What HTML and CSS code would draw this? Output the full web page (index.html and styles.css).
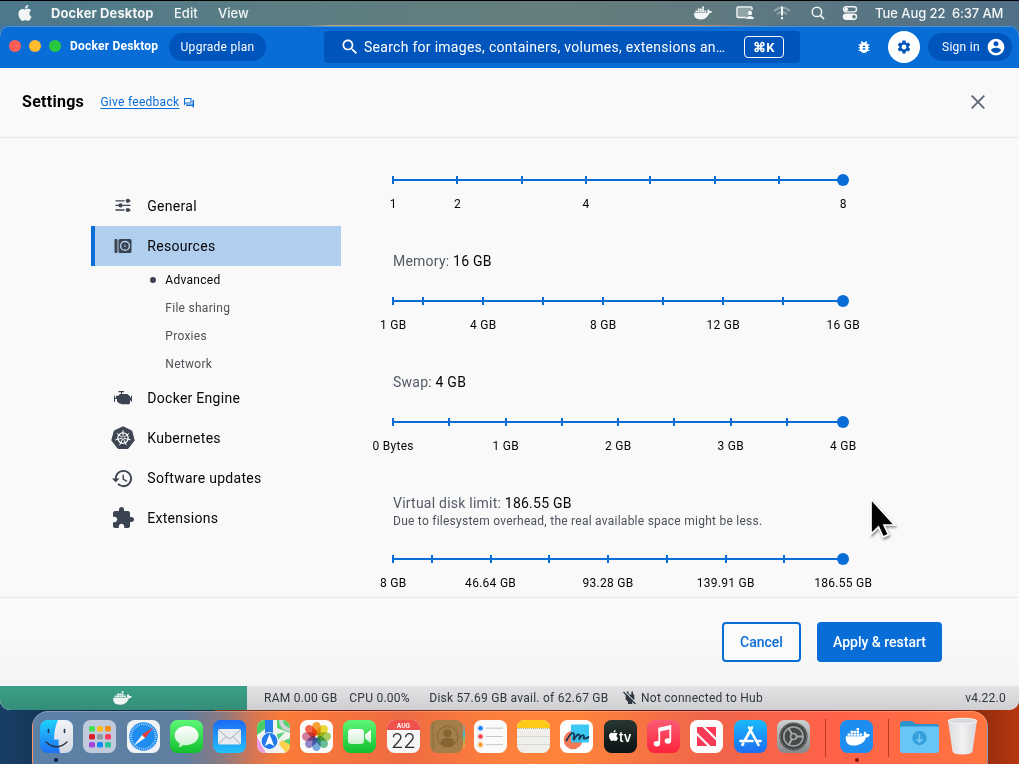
FILE: index.html
```html
<!DOCTYPE html>
<html lang="en">
<head>
<meta charset="utf-8">
<title>Docker Desktop</title>
<link rel="stylesheet" href="styles.css">
</head>
<body>
<svg class="defs" width="0" height="0">
  <symbol id="whale" viewBox="0 3 24 18"><path d="M13.8 8.82h2.5v2.26h-2.5zM10.84 3.39h2.5v2.26h-2.5zM10.84 6.1h2.5v2.26h-2.5zM7.9 6.1h2.5v2.26H7.9zM4.95 6.1h2.5v2.26h-2.5zM10.84 8.82h2.5v2.26h-2.5zM7.9 8.82h2.5v2.26H7.9zM4.95 8.82h2.5v2.26h-2.5zM2.03 8.82h2.5v2.26h-2.5zM23.763 9.89c-.065-.051-.672-.51-1.954-.51-.338.001-.676.03-1.01.087-.248-1.7-1.653-2.53-1.716-2.566l-.344-.199-.226.327c-.284.438-.49.922-.612 1.43-.23.97-.09 1.882.403 2.661-.595.332-1.55.413-1.744.42H.751a.751.751 0 00-.75.748 11.376 11.376 0 00.692 4.062c.545 1.428 1.355 2.48 2.41 3.124 1.18.723 3.1 1.137 5.275 1.137.983.003 1.963-.086 2.93-.266a12.248 12.248 0 003.823-1.389c.98-.567 1.86-1.288 2.61-2.136 1.252-1.418 1.998-2.997 2.553-4.4h.221c1.372 0 2.215-.549 2.68-1.009.309-.293.55-.65.707-1.046z"/></symbol>
  <symbol id="apple" viewBox="0 0 24 24"><path d="M12.152 6.896c-.948 0-2.415-1.078-3.96-1.04-2.04.027-3.91 1.183-4.961 3.014-2.117 3.675-.546 9.103 1.519 12.09 1.013 1.454 2.208 3.09 3.792 3.039 1.52-.065 2.09-.987 3.935-.987 1.831 0 2.35.987 3.96.948 1.637-.026 2.676-1.48 3.676-2.948 1.156-1.688 1.636-3.325 1.662-3.415-.039-.013-3.182-1.221-3.22-4.857-.026-3.04 2.48-4.494 2.597-4.559-1.429-2.09-3.623-2.324-4.39-2.376-2-.156-3.675 1.09-4.61 1.09zM15.53 3.83c.843-1.012 1.4-2.427 1.245-3.83-1.207.052-2.662.805-3.532 1.818-.78.896-1.454 2.338-1.273 3.714 1.338.104 2.715-.688 3.559-1.701"/></symbol>
</svg>
<div class="desktop">
  <div class="menubar">
    <svg class="mb-apple" width="16" height="16"><use href="#apple"/></svg>
    <span class="mb-app">Docker Desktop</span>
    <span class="mb-edit">Edit</span>
    <span class="mb-view">View</span>
    <div class="mb-right">
      <svg width="18" height="14"><use href="#whale"/></svg>
      <svg width="18" height="14" viewBox="0 0 18 14" fill="none"><path d="M10 11.5H2.2A1.2 1.2 0 0 1 1 10.300V2.200A1.200 1.200 0 0 1 2.200 1h12.600A1.200 1.200 0 0 1 16 2.200V4" stroke="currentColor" stroke-width="1.500"/><path d="M2 2h13v4l-4 5H2z" fill="currentColor" opacity=".35"/><circle cx="14" cy="7" r="2.200" fill="currentColor"/><path d="M10 13c0-4 8-4 8 0z" fill="currentColor"/></svg>
      <svg width="18" height="14" viewBox="0 0 18 14" fill="none" stroke="currentColor"><path d="M1 5.200Q9-2.200 17 5.200M4 8.200q5-4.400 10 0" stroke-width="2" opacity=".35"/><path d="M9 .500v9M9 11v2.200" stroke-width="2"/></svg>
      <svg width="14" height="14" viewBox="0 0 14 14" fill="none" stroke="currentColor"><circle cx="5.900" cy="5.900" r="4.700" stroke-width="1.500"/><path d="M9.400 9.400l3.600 3.600" stroke-width="1.700"/></svg>
      <svg width="16" height="14" viewBox="0 0 16 14" fill="none"><rect x="1.500" y=".700" width="13" height="5.200" rx="2.600" stroke="currentColor" stroke-width="1.400"/><circle cx="4.200" cy="3.300" r="1.900" fill="currentColor"/><rect x=".800" y="7.600" width="14.400" height="6.300" rx="3.100" fill="currentColor"/><circle cx="12" cy="10.800" r="1.800" fill="#5b7680"/></svg>
    </div>
    <span class="mb-date">Tue Aug 22</span><span class="mb-time">6:37 AM</span>
  </div>

  <div class="window">
    <header class="titlebar">
      <i class="light red"></i><i class="light amber"></i><i class="light green"></i>
      <b class="title">Docker Desktop</b>
      <button class="pill upgrade">Upgrade plan</button>
      <div class="search">
        <svg width="20" height="20" viewBox="0 0 24 24"><path d="M15.5 14h-.79l-.28-.27C15.410 12.590 16 11.110 16 9.500 16 5.910 13.090 3 9.500 3S3 5.910 3 9.500 5.910 16 9.500 16c1.610 0 3.090-.59 4.230-1.570l.27.28v.79l5 4.990L20.490 19l-4.990-5zm-6 0C7.010 14 5 11.990 5 9.500S7.010 5 9.500 5 14 7.010 14 9.500 11.990 14 9.500 14z"/></svg>
        <span class="search-text">Search for images, containers, volumes, extensions an…</span>
        <kbd>⌘K</kbd>
      </div>
      <svg class="bug" width="16" height="16" viewBox="0 0 24 24"><path d="M20 8h-2.810c-.45-.78-1.070-1.450-1.820-1.960L17 4.410 15.590 3l-2.170 2.170C12.960 5.060 12.490 5 12 5c-.49 0-.96.06-1.410.17L8.410 3 7 4.410l1.620 1.630C7.880 6.550 7.260 7.220 6.810 8H4v2h2.090c-.05.33-.09.66-.09 1v1H4v2h2v1c0 .34.04.67.09 1H4v2h2.810c1.040 1.790 2.970 3 5.190 3s4.150-1.210 5.190-3H20v-2h-2.090c.05-.33.09-.66.09-1v-1h2v-2h-2v-1c0-.34-.04-.67-.09-1H20V8zm-6 8h-4v-2h4v2zm0-4h-4v-2h4v2z"/></svg>
      <div class="gear"><svg width="16" height="16" viewBox="0 0 24 24"><path d="M19.140 12.940c.04-.3.060-.61.060-.94 0-.32-.02-.64-.07-.94l2.030-1.580c.18-.14.23-.41.12-.61l-1.920-3.320c-.12-.22-.37-.29-.59-.22l-2.390.96c-.5-.38-1.030-.7-1.620-.94l-.36-2.540c-.04-.24-.24-.41-.48-.41h-3.840c-.24 0-.43.17-.47.41l-.36 2.540c-.59.24-1.130.57-1.620.94l-2.390-.96c-.22-.08-.47 0-.59.22L2.740 8.870c-.12.21-.08.47.12.61l2.030 1.580c-.05.3-.09.63-.09.94s.02.64.07.94l-2.030 1.580c-.18.14-.23.41-.12.61l1.920 3.320c.12.22.37.29.59.22l2.390-.96c.5.38 1.030.7 1.620.94l.36 2.540c.05.24.24.41.48.41h3.840c.24 0 .44-.17.47-.41l.36-2.540c.59-.24 1.130-.56 1.620-.94l2.390.96c.22.08.47 0 .59-.22l1.920-3.320c.12-.22.07-.47-.12-.61l-2.010-1.580zM12 15.600c-1.980 0-3.600-1.620-3.600-3.600s1.620-3.600 3.600-3.600 3.600 1.620 3.600 3.600-1.620 3.600-3.600 3.600z"/></svg></div>
      <button class="pill signin">Sign in<svg width="20" height="20" viewBox="0 0 24 24"><path d="M12 2C6.480 2 2 6.480 2 12s4.480 10 10 10 10-4.480 10-10S17.520 2 12 2zm0 3c1.660 0 3 1.340 3 3s-1.340 3-3 3-3-1.340-3-3 1.340-3 3-3zm0 14.200c-2.500 0-4.710-1.280-6-3.220.03-1.990 4-3.080 6-3.080 1.990 0 5.970 1.090 6 3.080-1.290 1.940-3.500 3.220-6 3.220z"/></svg></button>
    </header>

    <div class="page-head">
      <h1>Settings</h1>
      <a class="feedback">Give feedback</a>
      <svg class="chat" width="12" height="12" viewBox="0 0 24 24"><path d="M15 4v7H5.170L4 12.170V4h11m1-2H3c-.55 0-1 .45-1 1v14l4-4h10c.55 0 1-.45 1-1V3c0-.55-.45-1-1-1zm5 4h-2v9H6v2c0 .55.45 1 1 1h11l4 4V7c0-.55-.45-1-1-1z"/></svg>
      <svg class="close" width="16" height="16" viewBox="0 0 16 16"><path d="M1.700 1.700l12.600 12.600M14.300 1.700L1.700 14.300" stroke="#5b6573" stroke-width="1.800"/></svg>
    </div>

    <main class="body">
      <nav class="side">
        <a class="item"><span class="ico"><svg width="16" height="16" viewBox="0 0 16 16"><path d="M.500 2.800h9M11 2.800h4.500M.500 7.400h4M8 7.400h7.500M.500 12h9M11 12h4.500" stroke="#3b4450" stroke-width="1.300"/><circle cx="12.800" cy="2.800" r="2.100"/><circle cx="5.600" cy="7.400" r="2.100"/><circle cx="12.800" cy="12" r="2.100"/></svg></span>General</a>
        <a class="item active"><span class="ico"><svg width="18" height="16" viewBox="0 0 18 16"><rect x=".5" y="1" width="3" height="14" rx="1"/><rect x="4.500" y="1" width="13" height="14" rx="1.500"/><circle cx="11" cy="7.900" r="4.400" fill="none" stroke="#b0ceee" stroke-width="1.400"/><circle cx="11" cy="7.900" r="1" fill="#8fa8c4"/></svg></span>Resources</a>
        <a class="sub current">Advanced</a>
        <a class="sub">File sharing</a>
        <a class="sub">Proxies</a>
        <a class="sub">Network</a>
        <a class="item"><span class="ico"><svg width="20" height="16" viewBox="0 0 20 16"><path d="M5.500 1h5.500v1.200H9V4h5.500l1.500 1.500V6h1v1.500h1V5.800h1v6h-1V10.500h-1v3l-1 .800H9l-2.500-.8L4 11.500V9H2v3H1V5.500h1V8h1V5.800h2.500L6.800 4H8V2.200H5.500z"/></svg></span>Docker Engine</a>
        <a class="item"><span class="ico"><svg width="24" height="24" viewBox="0 0 24 24"><path d="M12 .800l8.700 4.100 2.500 9.400-6.200 8.200H7L.800 14.300l2.500-9.400z" stroke="#3b4450" stroke-width="1" stroke-linejoin="round"/><g fill="none" stroke="#fff" stroke-width="1.300"><circle cx="12" cy="12.100" r="5.200"/><path d="M12 12.100V4.200M12 12.100l6.200-4.900M12 12.100l7.700 1.800M12 12.100l3.400 7.100M12 12.100l-3.400 7.100M12 12.100l-7.700 1.800M12 12.100L5.800 7.200" stroke-width="1"/></g><circle cx="12" cy="12.100" r="1"/></svg></span>Kubernetes</a>
        <a class="item history"><span class="ico"><svg width="23" height="23" viewBox="0 0 24 24"><path d="M13 3c-4.970 0-9 4.030-9 9H1l3.890 3.890.07.14L9 12H6c0-3.870 3.130-7 7-7s7 3.130 7 7-3.130 7-7 7c-1.930 0-3.680-.79-4.940-2.060l-1.420 1.420C8.270 19.990 10.510 21 13 21c4.970 0 9-4.030 9-9s-4.030-9-9-9zm-1 5v5l4.280 2.540.72-1.210-3.500-2.080V8H12z"/></svg></span>Software updates</a>
        <a class="item"><span class="ico"><svg width="24" height="24" viewBox="0 0 24 24"><path d="M20.500 11H19V7c0-1.100-.9-2-2-2h-4V3.500C13 2.120 11.880 1 10.500 1S8 2.120 8 3.500V5H4c-1.100 0-1.990.9-1.990 2v3.800H3.500c1.490 0 2.700 1.210 2.700 2.700s-1.210 2.700-2.700 2.700H2V20c0 1.100.9 2 2 2h3.800v-1.500c0-1.490 1.210-2.700 2.700-2.700 1.490 0 2.700 1.210 2.700 2.700V22H17c1.100 0 2-.9 2-2v-4h1.500c1.380 0 2.500-1.120 2.500-2.500S21.880 11 20.500 11z"/></svg></span>Extensions</a>
      </nav>
      <section class="resources">
        <div class="field">
          <div class="slider"><i style="left:0%"></i><i style="left:14.286%"></i><i style="left:28.571%"></i><i style="left:42.857%"></i><i style="left:57.143%"></i><i style="left:71.5%"></i><i style="left:85.714%"></i><b></b><span style="left:0%">1</span><span style="left:14.286%">2</span><span style="left:42.857%">4</span><span style="left:100%">8</span></div>
        </div>
        <div class="field">
          <div class="label">Memory: <em>16 GB</em></div>
          <div class="slider"><i style="left:0%"></i><i style="left:6.667%"></i><i style="left:20%"></i><i style="left:33.333%"></i><i style="left:46.667%"></i><i style="left:60%"></i><i style="left:73.333%"></i><i style="left:86.667%"></i><b></b><span style="left:0%">1 GB</span><span style="left:20%">4 GB</span><span style="left:46.667%">8 GB</span><span style="left:73.333%">12 GB</span><span style="left:100%">16 GB</span></div>
        </div>
        <div class="field">
          <div class="label">Swap: <em>4 GB</em></div>
          <div class="slider"><i style="left:0%"></i><i style="left:12.5%"></i><i style="left:25%"></i><i style="left:37.5%"></i><i style="left:50%"></i><i style="left:62.5%"></i><i style="left:75%"></i><i style="left:87.5%"></i><b></b><span style="left:0%">0 Bytes</span><span style="left:25%">1 GB</span><span style="left:50%">2 GB</span><span style="left:75%">3 GB</span><span style="left:100%">4 GB</span></div>
        </div>
        <div class="field">
          <div class="label">Virtual disk limit: <em>186.55 GB</em></div>
          <div class="hint">Due to filesystem overhead, the real available space might be less.</div>
          <div class="slider"><i style="left:0%"></i><i style="left:8.6%"></i><i style="left:21.8%"></i><i style="left:34.7%"></i><i style="left:47.75%"></i><i style="left:60.9%"></i><i style="left:73.9%"></i><i style="left:86.95%"></i><b></b><span style="left:0%">8 GB</span><span style="left:21.65%">46.64 GB</span><span style="left:47.75%">93.28 GB</span><span style="left:73.9%">139.91 GB</span><span style="left:100%">186.55 GB</span></div>
        </div>
      </section>
    </main>

    <footer class="actions">
      <button class="btn cancel">Cancel</button>
      <button class="btn apply">Apply &amp; restart</button>
    </footer>

    <div class="status">
      <div class="engine"><svg width="19" height="14"><use href="#whale"/></svg></div>
      <span class="ram">RAM 0.00 GB</span>
      <span class="cpu">CPU 0.00%</span>
      <span class="disk">Disk 57.69 GB avail. of 62.67 GB</span>
      <svg width="13" height="14" viewBox="0 0 13 14"><path d="M4 .500h1.600v3h2.800v-3H10v3h1.300v5l-2 2.300V13H5v-2.200L2.700 8.500v-5H4z"/><path d="M1.500 .500l11.500 11.500" stroke="#dcdcde" stroke-width="1.200"/><path d="M.500 1l12 12" stroke="#2e3640" stroke-width="1.300"/></svg>
      <span class="hub">Not connected to Hub</span>
      <span class="ver">v4.22.0</span>
    </div>
  </div>

  <div class="dock">
    <div class="slot run"><svg viewBox="0 0 33 33"><defs><linearGradient id="gf" x2="0" y2="1"><stop stop-color="#1ed0fb"/><stop offset="1" stop-color="#1e70f3"/></linearGradient><linearGradient id="gw" x2="0" y2="1"><stop stop-color="#f3f4f7"/><stop offset="1" stop-color="#d3d8e2"/></linearGradient><clipPath id="r"><rect width="33" height="33" rx="7.500"/></clipPath></defs><g clip-path="url(#r)"><path d="M0 0h33v33H0z" fill="url(#gf)"/><path d="M18 0h15v33H20q-1.800-7-1.500-13.500H14Q14 9 18 0z" fill="url(#gw)"/></g><path d="M8.500 9.500v3M24.500 9.500v3" stroke="#173653" stroke-width="1.600" stroke-linecap="round"/><path d="M6 22q10.500 9.500 21 0" fill="none" stroke="#223143" stroke-width="1.300" stroke-linecap="round"/></svg></div>
    <div class="slot"><svg viewBox="0 0 33 33"><rect width="33" height="33" rx="7.500" fill="#bfcbdc"/><g><rect x="6" y="6" width="6" height="5.500" rx="1.500" fill="#3fe053"/><rect x="14" y="6" width="6" height="5.500" rx="1.500" fill="#ffbd16"/><rect x="22" y="6" width="6" height="5.500" rx="1.500" fill="#ff8d0a"/><rect x="6" y="14" width="6" height="5.500" rx="1.500" fill="#dc1f2d"/><rect x="14" y="14" width="6" height="5.500" rx="1.500" fill="#929ba1"/><rect x="22" y="14" width="6" height="5.500" rx="1.500" fill="#fb3d5e"/><rect x="6" y="22" width="6" height="5.500" rx="1.500" fill="#a345dc"/><rect x="14" y="22" width="6" height="5.500" rx="1.500" fill="#178cf9"/><rect x="22" y="22" width="6" height="5.500" rx="1.500" fill="#26c59c"/></g></svg></div>
    <div class="slot"><svg viewBox="0 0 33 33"><rect width="33" height="33" rx="7.500" fill="#f1f2f4"/><circle cx="16.500" cy="16.500" r="14.200" fill="#1f8df0"/><circle cx="16.500" cy="16.500" r="12.300" fill="none" stroke="#d6ecff" stroke-width="2" stroke-dasharray=".6 1.300"/><path d="M26.500 7L18 18.200 14.800 15z" fill="#ee3c35"/><path d="M6.500 26L15 14.900l3.100 3.200z" fill="#f4f4f4"/></svg></div>
    <div class="slot"><svg viewBox="0 0 33 33"><defs><linearGradient id="gg" x2="0" y2="1"><stop stop-color="#5df777"/><stop offset="1" stop-color="#12c02d"/></linearGradient><linearGradient id="gs" x2="0" y2="1"><stop stop-color="#fff"/><stop offset="1" stop-color="#cdf0d0"/></linearGradient></defs><rect width="33" height="33" rx="7.500" fill="url(#gg)"/><path d="M16.500 6C9.800 6 4.600 10.200 4.600 15.600c0 3.300 2 6.200 5.200 7.900-.1 1.400-.6 2.500-1.400 3.500 2 0 3.700-.7 5-2 7.900 1.200 15.200-3.200 15.200-9.400C28.600 10.200 23.200 6 16.500 6z" fill="url(#gs)"/></svg></div>
    <div class="slot"><svg viewBox="0 0 33 33"><defs><linearGradient id="gm" x2="0" y2="1"><stop stop-color="#1c6af3"/><stop offset="1" stop-color="#22c2fc"/></linearGradient></defs><rect width="33" height="33" rx="7.500" fill="url(#gm)"/><rect x="5" y="9" width="23" height="15.500" rx="1.800" fill="#e8ecf0"/><path d="M5.500 10l9.500 8q1.500 1.200 3 0l9.500-8M5.700 24l7.300-7.600M27.300 24L20 16.400" fill="none" stroke="#9ba6b0" stroke-width=".9"/></svg></div>
    <div class="slot"><svg viewBox="0 0 33 33"><g clip-path="url(#r)"><path fill="#f1f1ee" d="M0 0h33v33H0z"/><path d="M0 0h8v9L0 15z" fill="#48cf66"/><path d="M20 0h13v13L20 8z" fill="#53d26f"/><path d="M33 12L17 29v4h16z" fill="#f4f4ef"/><path d="M26 21l7 9v-12zM20 14l8-2-8 9z" fill="#59d47b"/><path d="M33 25l-8-5-3 4 7 9h4z" fill="#fdd14d"/><path d="M0 17l9 16H0z" fill="#eb9be0"/><path d="M24 0q0 8 9 10" stroke="#ccd2d7" stroke-width="4" fill="none"/><path d="M8 0h8v14H8z" fill="#277ef0"/><circle cx="12.500" cy="21" r="8.500" fill="#2378ed" stroke="#edf3fc" stroke-width="1.200"/></g><path d="M12.500 14l4.700 12-4.700-2.600L7.800 26z" fill="#fff"/></svg></div>
    <div class="slot"><svg viewBox="0 0 33 33"><rect width="33" height="33" rx="7.500" fill="#fbfbfb"/><g class="petals" transform="translate(16.500 16.500)"><rect x="-4.200" y="-14.500" width="8.400" height="13.500" rx="4.200" fill="#f99a20"/><rect x="-4.200" y="-14.500" width="8.400" height="13.500" rx="4.200" fill="#e9d823" transform="rotate(45)"/><rect x="-4.200" y="-14.500" width="8.400" height="13.500" rx="4.200" fill="#a2cb4d" transform="rotate(90)"/><rect x="-4.200" y="-14.500" width="8.400" height="13.500" rx="4.200" fill="#5cb98c" transform="rotate(135)"/><rect x="-4.200" y="-14.500" width="8.400" height="13.500" rx="4.200" fill="#6aa2dc" transform="rotate(180)"/><rect x="-4.200" y="-14.500" width="8.400" height="13.500" rx="4.200" fill="#8b78c4" transform="rotate(225)"/><rect x="-4.200" y="-14.500" width="8.400" height="13.500" rx="4.200" fill="#cf7191" transform="rotate(270)"/><rect x="-4.200" y="-14.500" width="8.400" height="13.500" rx="4.200" fill="#f9573f" transform="rotate(315)"/></g></svg></div>
    <div class="slot"><svg viewBox="0 0 33 33"><rect width="33" height="33" rx="7.500" fill="url(#gg)"/><rect x="5" y="9" width="16" height="15" rx="3.500" fill="url(#gs)"/><path d="M22 14.500l5-4q1-.5 1 .6v10.800q0 1.100-1 .6l-5-4z" fill="url(#gs)"/></svg></div>
    <div class="slot"><svg viewBox="0 0 33 33"><g clip-path="url(#r)"><path d="M0 0h33v33H0z" fill="#f6f6f6"/><path d="M0 0h33v10H0z" fill="#f0514c"/></g><text x="16.500" y="8" class="cal-m">AUG</text><text x="16.200" y="28" class="cal-d">22</text></svg></div>
    <div class="slot"><svg viewBox="0 0 33 33"><path d="M30 5h5v6h-5z" fill="#a6957c"/><path d="M30 11h5v6h-5z" fill="#4db6c6"/><path d="M30 17h5v5h-5z" fill="#8dba5f"/><path d="M30 22h5v6h-5z" fill="#e99d3e"/><rect width="33" height="33" rx="7.500" fill="#a37e4b"/><path d="M3 2v29" stroke="#8d6a39" stroke-width="1"/><circle cx="17.500" cy="16.500" r="10.300" fill="none" stroke="#856333" stroke-width="1"/><circle cx="17.500" cy="13.300" r="4" fill="#856333"/><path d="M10.500 23q0-5 7-5t7 5q-3 3.500-7 3.500t-7-3.500z" fill="#856333"/></svg></div>
    <div class="slot"><svg viewBox="0 0 33 33"><rect width="33" height="33" rx="7.500" fill="#fafafa"/><g stroke-width="1" stroke="#c6c6ca"><path d="M12 8.200h17M12 16.500h17M12 24.700h17"/></g><circle cx="6.500" cy="8.200" r="2.200" fill="#167efb"/><circle cx="6.500" cy="16.500" r="2.200" fill="#f43f48"/><circle cx="6.500" cy="24.700" r="2.200" fill="#f99a28"/><g fill="none" stroke-width=".5"><circle cx="6.500" cy="8.200" r="3" stroke="#9ac5f7"/><circle cx="6.500" cy="16.500" r="3" stroke="#f6afb1"/><circle cx="6.500" cy="24.700" r="3" stroke="#f9cf9c"/></g></svg></div>
    <div class="slot"><svg viewBox="0 0 33 33"><g clip-path="url(#r)"><path d="M0 0h33v33H0z" fill="#efeeeb"/><path d="M0 0h33v8H0z" fill="#fdcb17"/></g><path d="M0 8.500h33" stroke="#a58c39" stroke-width=".6" stroke-dasharray="1 1"/><path d="M0 16.500h33M0 24.500h33" stroke="#d2d0cc" stroke-width=".8"/></svg></div>
    <div class="slot"><svg viewBox="0 0 33 33"><rect width="33" height="33" rx="7.500" fill="#fdfdfd"/><circle cx="13" cy="20" r="9.300" fill="#f57a5a"/><rect x="11" y="4.500" width="18" height="18" rx="1" fill="#2cc4f2" opacity=".93"/><path d="M6.500 20.500q4.500-8 6.500-7.500t.5 7q4-6.500 5.500-5.500t0 5q3-5 4.300-4.300t.3 3.300q2.200.8 4.900-1.500" fill="none" stroke="#123654" stroke-width="1.800" stroke-linecap="round"/></svg></div>
    <div class="slot"><svg viewBox="0 0 33 33"><defs><linearGradient id="gt" x2="0" y2="1"><stop stop-color="#283732"/><stop offset="1" stop-color="#0b1213"/></linearGradient></defs><rect width="33" height="33" rx="7.500" fill="url(#gt)"/><use href="#apple" x="4" y="9.500" width="11" height="12" fill="#fff"/><text x="15" y="21.500" class="tv">tv</text></svg></div>
    <div class="slot"><svg viewBox="0 0 33 33"><defs><linearGradient id="gu" x2="0" y2="1"><stop stop-color="#fb5c74"/><stop offset="1" stop-color="#fa233b"/></linearGradient></defs><rect width="33" height="33" rx="7.500" fill="url(#gu)"/><path d="M12.300 23V8.500l11-2.500V20.500" fill="none" stroke="#fff" stroke-width="1.700"/><path d="M11.500 8.200l12.600-2.900v3.600l-12.600 2.900z" fill="#fff"/><ellipse cx="9.900" cy="23.700" rx="3.200" ry="2.700" fill="#fff"/><ellipse cx="20.900" cy="21" rx="3.200" ry="2.700" fill="#fff"/></svg></div>
    <div class="slot"><svg viewBox="0 0 33 33"><rect width="33" height="33" rx="7.500" fill="#fdfdfd"/><path d="M7 7h5.500L26 20.500V26h-5.500L7 12.500zM15.500 7H26v10.500zM7 15.500V26h10.500z" fill="#f93a57"/></svg></div>
    <div class="slot"><svg viewBox="0 0 33 33"><defs><linearGradient id="ga" x2="0" y2="1"><stop stop-color="#19b9fb"/><stop offset="1" stop-color="#1c6df2"/></linearGradient></defs><rect width="33" height="33" rx="7.500" fill="url(#ga)"/><g stroke="#fff" stroke-width="2.600" stroke-linecap="round"><path d="M18 7.500L10.500 21M15 7.500L24.500 25M6.500 21h12M23 21h3.500M9.300 23.500l-.9 1.500"/></g></svg></div>
    <div class="slot"><svg viewBox="0 0 33 33"><defs><linearGradient id="gp" x2="0" y2="1"><stop stop-color="#cdd2d3"/><stop offset="1" stop-color="#85878a"/></linearGradient></defs><rect width="33" height="33" rx="7.500" fill="url(#gp)"/><circle cx="16.500" cy="16.500" r="14" fill="#3f4344"/><circle cx="16.500" cy="16.500" r="13" fill="none" stroke="#858887" stroke-width="1.200" stroke-dasharray="1 1"/><circle cx="16.500" cy="16.500" r="9.700" fill="#45494a" stroke="#9b9f9f" stroke-width="1.800"/><circle cx="16.500" cy="16.500" r="3" fill="none" stroke="#a7abab" stroke-width="1.600"/><path d="M19.500 16.500H26M15 14L11.500 8.300M15 19l-3.500 6" stroke="#a7abab" stroke-width="2"/></svg></div>
    <div class="sep"></div>
    <div class="slot run dark"><svg viewBox="0 0 33 33"><rect width="33" height="33" rx="7.500" fill="#1d8def"/><use href="#whale" x="5.500" y="7.500" width="24.500" height="18.500" fill="#fff"/></svg></div>
    <div class="sep"></div>
    <div class="slot wide"><svg viewBox="0 0 39 33"><path d="M0 4.500Q0 1 3 1h9l4 3h20q3 0 3 3v22H0z" fill="#2c92cd"/><path d="M0 6.500h39V30q0 3-3 3H3q-3 0-3-3z" fill="#68c5f5"/><circle cx="19.500" cy="18" r="7.200" fill="#36a0df"/><path d="M19.500 14v7.500M16.500 19l3 3 3-3" fill="none" stroke="#78cbf6" stroke-width="1.300"/></svg></div>
    <div class="slot trash"><svg viewBox="0 0 31 37"><defs><linearGradient id="gb"><stop stop-color="#dcdcde"/><stop offset=".5" stop-color="#f1f1f3"/><stop offset="1" stop-color="#d6d7da"/></linearGradient></defs><path d="M1 2.500l4.500 31q.6 3 10 3t10-3L30 2.500z" fill="url(#gb)"/><ellipse cx="15.500" cy="3" rx="14.500" ry="2.700" fill="#d9dadd" stroke="#f5f5f6" stroke-width="1"/></svg></div>
  </div>

  <svg class="cursor" viewBox="0 0 28 42"><path d="M2 2v35l7.500-7 4.500 10 5.500-2.500-4.500-9.500h10.500z" fill="#050505" stroke="#fff" stroke-width="1.700" stroke-linejoin="miter"/></svg>
</div>
</body>
</html>
```
FILE: styles.css
```css
* { box-sizing: border-box; }
body { margin: 0; font-family: Roboto, sans-serif; letter-spacing: .28px; }
svg { display: block; flex: none; fill: currentColor; }
svg[fill="none"] { fill: none; }
button { font: inherit; letter-spacing: inherit; border: 0; margin: 0; padding: 0; }
.defs { position: absolute; }
.desktop {
  position: relative; width: 1019px; height: 764px; overflow: hidden;
  display: flex; flex-direction: column;
  background:
    linear-gradient(90deg, #4278a0 0 305px, #bca877 330px, #c58c6a 700px, #4b708d 780px) 0 0 / 100% 36px no-repeat,
    linear-gradient(90deg, #173f66 0, #102a45 90px, #182b3c 214px, #8a3a0c 216px, #6b1d14 350px, #8c3810 460px, #5b1514 700px, #68200f 940px, #b8380f 1019px);
}
.menubar {
  height: 25px; flex: none; display: flex; align-items: center; padding: 0 0 1px 17px;
  border-top: 1px solid #000; color: #f2f5f5; letter-spacing: 0;
  font: 500 13px Inter, sans-serif;
  background: linear-gradient(90deg, #4c788b, #5c7e83 28%, #657d7d 55%, #5f7980 72%, #507087);
}
.menubar span { white-space: pre; }
.mb-app { font-weight: 700; margin-left: 18px; width: 123px; letter-spacing: .1px; }
.mb-edit { width: 44px; }
.mb-right { display: flex; align-items: center; margin-left: auto; }
.mb-right svg:nth-child(2) { margin-left: 24px; }
.mb-right svg:nth-child(3) { margin-left: 19px; }
.mb-right svg:nth-child(4) { margin-left: 20px; }
.mb-right svg:nth-child(5) { margin-left: 17px; }
.mb-date { margin-left: 17px; width: 77px; letter-spacing: -.05px; }
.mb-time { width: 67px; letter-spacing: -.15px; }

.window {
  height: 684px; flex: none; margin-top: 1px; border-radius: 10px; overflow: hidden;
  display: flex; flex-direction: column; background: #f9f9f9;
}
.titlebar {
  height: 42px; flex: none; display: flex; align-items: center; padding: 0 7px 0 9px;
  background: #086dd7; color: #fff; font-size: 12px; box-shadow: inset 0 1px #4d92d3;
}
.light { width: 12px; height: 12px; border-radius: 50%; margin-right: 8px; margin-top: -2px; }
.red { background: #ff5f57; } .amber { background: #febc2e; } .green { background: #28c840; }
.title { margin-left: 1px; margin-top: -2px; width: 99px; white-space: nowrap; font-weight: 700; letter-spacing: .22px; }
.pill { height: 28px; border-radius: 14px; background: #0055bc; color: #fff; display: flex; align-items: center; }
.upgrade { width: 97px; justify-content: center; }
.search {
  width: 476px; height: 32px; margin-left: 58px; border-radius: 4px; background: #0055bc;
  display: flex; align-items: center; padding-left: 16px; font-size: 14px;
}
.search-text { margin-left: 4px; width: 380px; white-space: nowrap; }
.search kbd {
  width: 40px; height: 22px; border: 1px solid #fff; border-radius: 4px;
  display: flex; align-items: center; justify-content: center; font: 700 13px Roboto, sans-serif;
}
.bug { margin-left: 56px; }
.gear {
  width: 32px; height: 32px; border-radius: 50%; background: #fff; color: #0055bc; margin-left: 16px;
  display: flex; align-items: center; justify-content: center;
}
.signin { margin-left: 8px; width: 84px; padding-left: 14px; gap: 6px; white-space: nowrap; }

.page-head {
  height: 70px; flex: none; display: flex; align-items: center; padding: 0 33px 2px 22px;
  border-bottom: 1px solid #e8e8ea;
}
h1 { margin: 0; font-size: 16px; font-weight: 700; width: 78.4px; letter-spacing: .28px; white-space: nowrap; }
.feedback { font-size: 12px; color: #086dd7; text-decoration: underline; text-underline-offset: 2px; white-space: nowrap; }
.chat { margin: 2px 0 0 4px; color: #086dd7; }
.close { margin-left: auto; }

.body { height: 459px; flex: none; display: flex; overflow: hidden; }
.side { width: 250px; margin-left: 91px; padding-top: 48px; color: #050505; font-size: 14px; }
.item { height: 40px; display: flex; align-items: center; }
.ico { width: 56.3px; padding-left: 8px; display: flex; justify-content: center; align-items: center; color: #3b4450; }
.history svg { margin-left: -2px; }
.active { background: #b0ceee; border-left: 4px solid #086dd7; }
.active .ico { width: 52.3px; padding-left: 4px; }
.sub { height: 28px; display: flex; align-items: center; padding-left: 74.3px; font-size: 12px; color: #4f5256; }
.current { color: #050505; padding-left: 59px; }
.current::before { content: ""; width: 6px; height: 6px; border-radius: 50%; background: #3b4450; margin-right: 9.3px; }
.resources { margin-left: 52px; padding-top: 28px; width: 450px; }
.field { margin-bottom: 37px; }
.label { height: 20px; line-height: 20px; font-size: 14px; color: #545b66; margin-bottom: 16px; letter-spacing: .23px; }
.label em { font-style: normal; color: #050505; }
.label:has(+ .hint) { margin-bottom: 0; }
.hint { height: 16px; line-height: 16px; font-size: 12px; color: #4b525c; margin-bottom: 16px; white-space: nowrap; letter-spacing: .25px; }
.slider { position: relative; height: 48px; font-size: 12px; color: #050505; background: linear-gradient(#086dd7, #086dd7) 0 13px / 100% 2px no-repeat; }
.slider i { position: absolute; top: 10px; width: 2px; height: 8px; margin-left: -1px; background: #086dd7; }
.slider b { position: absolute; right: -6px; top: 8px; width: 12px; height: 12px; border-radius: 50%; background: #086dd7; }
.slider span { position: absolute; top: 30px; margin-left: .2px; line-height: 16px; transform: translateX(-50%); white-space: nowrap; }

.actions {
  height: 89px; flex: none; border-top: 1px solid #e8e8ea; display: flex; align-items: center; justify-content: flex-end;
  gap: 16px; padding-right: 77px; background: linear-gradient(#f9f9f9 50%, #f4f4f4);
}
.btn { height: 40px; border-radius: 4px; font-size: 14px; font-weight: 500; letter-spacing: 0; }
.cancel { width: 79px; border: 2px solid #086dd7; background: #fbfbfb; color: #086dd7; }
.apply { width: 125px; background: #086dd7; color: #fff; }

.status {
  height: 24px; flex: none; display: flex; align-items: center; padding-right: 13px;
  background: linear-gradient(#e3e3e5, #cfcfd2); font-size: 12px; color: #2e3640; letter-spacing: .25px;
}
.status span { white-space: nowrap; }
.engine { width: 247px; height: 24px; background: linear-gradient(#3ba087, #348d79); color: #f1f5f3; display: flex; align-items: center; justify-content: center; padding-right: 2px; }
.ram { margin-left: 17px; width: 85.3px; }
.cpu { width: 80px; }
.disk { width: 193.700px; }
.hub { margin-left: 5px; }
.ver { margin-left: auto; }

.dock {
  width: 956px; height: 66px; flex: none; margin: 1px 0 0 32px; border-radius: 16px; padding: 8px 0 0 1.800px; display: flex;
  border: 1px solid rgba(255, 255, 255, .22);
  background: linear-gradient(90deg, #5c81a7 0, #5f7fa0 150px, #8d7a81 190px, #d9754f 222px, #fb7b38 250px, #ef6b43 370px, #ff803b 470px, #ff843a 540px, #f0664b 670px, #ff6248 800px, #ff7540 956px);
}
.slot { width: 43.37px; flex: none; display: flex; flex-direction: column; align-items: center; }
.slot svg { width: 33px; height: 33px; overflow: visible; }
.slot.run::after { content: ""; width: 4px; height: 4px; border-radius: 50%; background: #101a35; margin-top: 5px; }
.slot.dark::after { background: #7e1208; }
.wide svg { width: 39px; }
.trash svg { width: 31px; height: 37px; margin-top: -2px; }
.sep { width: 1px; height: 38px; margin: -1px 9.300px 0; background: #b93b20; flex: none; }
.petals rect { mix-blend-mode: multiply; opacity: .9; }
.cal-m { font: 700 6px Inter, sans-serif; letter-spacing: 0; text-anchor: middle; fill: #fff; }
.cal-d { font: 300 20.500px Inter, sans-serif; letter-spacing: -.5px; text-anchor: middle; fill: #303033; }
.tv { font: 600 13px Inter, sans-serif; letter-spacing: 0; fill: #fff; }
.cursor { position: absolute; left: 869px; top: 497px; width: 28px; height: 42px; filter: drop-shadow(1px 2px 1px rgba(0, 0, 0, .4)); }
```
